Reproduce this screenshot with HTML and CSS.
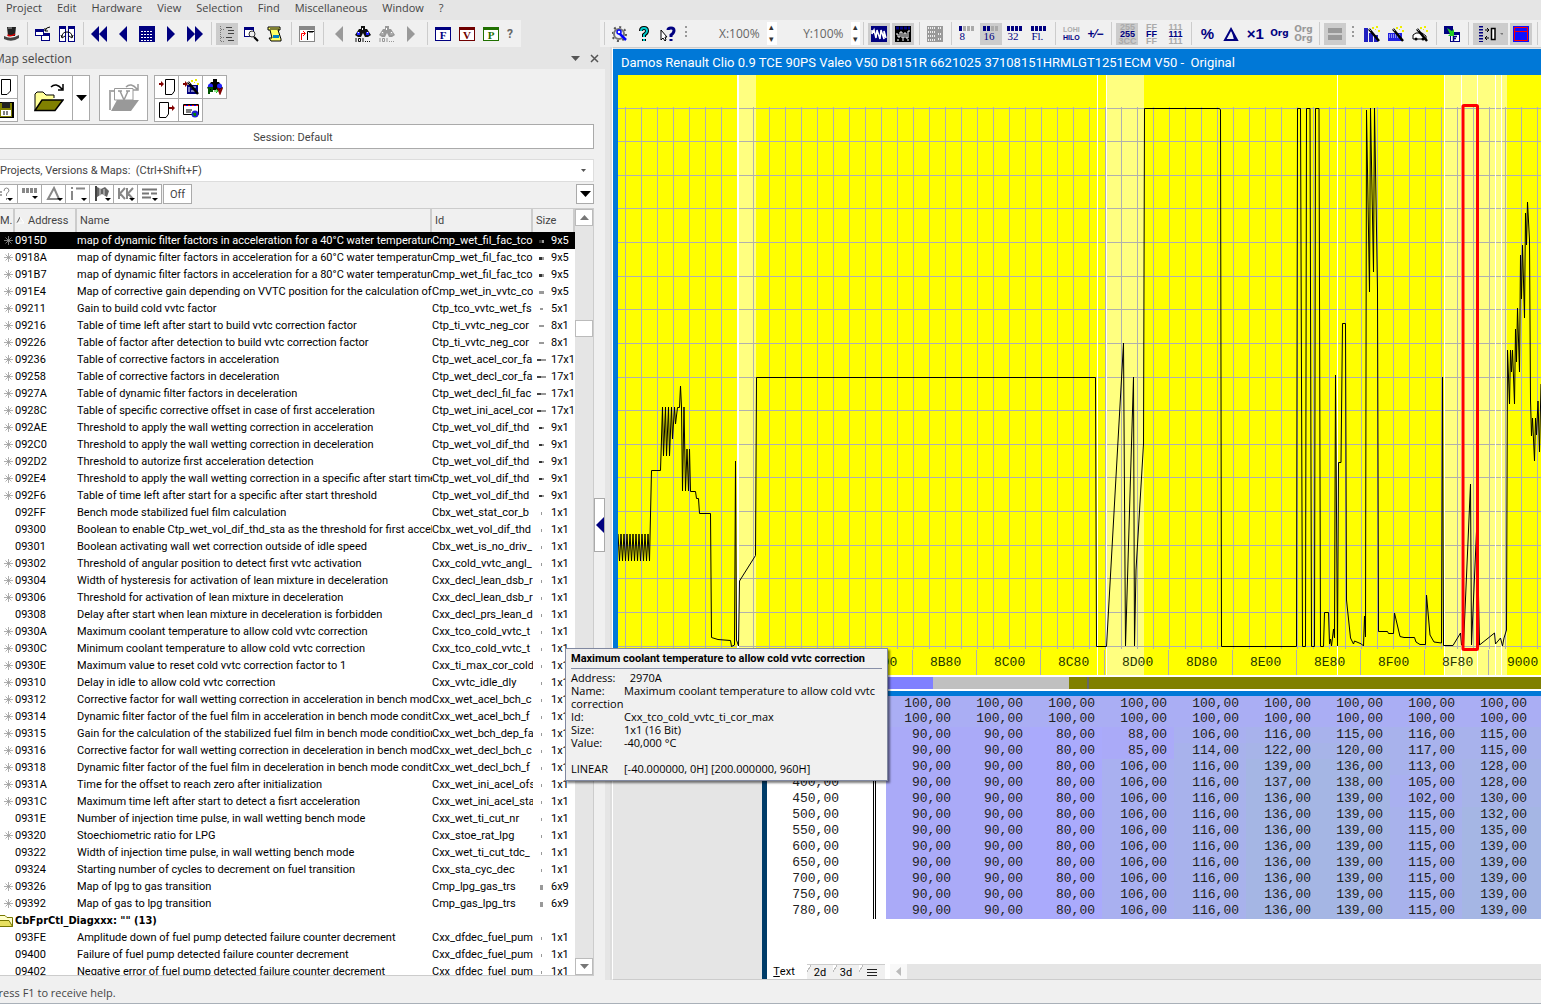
FILE: index.html
```html
<!DOCTYPE html>
<html lang="en">

<head>
    <meta charset="utf-8">
    <title>Damos Renault Clio 0.9 TCE 90PS</title>
    <link rel="stylesheet" href="styles.css">
</head>

<body>
    <!-- Shared icon shapes -->
    <svg class="defs" aria-hidden="true">
        <symbol id="star" viewBox="0 0 9 9"><path d="M4.500 0V9M0 4.500H9M1.500 1.500L7.500 7.500M7.500 1.500L1.500 7.500" stroke="#999" stroke-width=".8"/></symbol>
        <symbol id="prev" viewBox="0 0 16 16"><path d="M12 0V16L4 8z" fill="currentColor"/></symbol>
        <symbol id="next" viewBox="0 0 16 16"><path d="M4 0V16L12 8z" fill="currentColor"/></symbol>
        <symbol id="win" viewBox="0 0 16 16"><path d="M0 1H16V15H0z" fill="currentColor"/><path d="M1 4H15V14H1z" fill="#fff"/></symbol>
        <symbol id="bino" viewBox="0 0 16 16"><path d="M6 0H10V3H12L16 9L13 11H10L8 7L6 11H3L0 9L4 3H6z" fill="currentColor"/><path d="M2 6H5V9H2zM11 6H14V9H11z" fill="var(--lens)"/><path d="M3 6h1v1H3zM12 6h1v1h-1zM7 2h1v2H7z" fill="#fff"/><path d="M1 12v4M3.500 12.500h2v3h-2zM8 12v4M10 15.500h1M12 15.500h1M14 15.500h1" stroke="currentColor" fill="none"/></symbol>
        <symbol id="wand" viewBox="0 0 16 16"><path d="M5 3L15 15" stroke="#000" stroke-width="2.500"/><path d="M8 1h2v2H8zM12 0h2v2h-2zM14 4h2v2h-2zM11 3h1v1h-1z" fill="#ee0"/><path d="M5 3l2 2" stroke="#999"/></symbol>
        <symbol id="arrow" viewBox="0 0 16 16"><path d="M0 6H3V4L6 7L3 10V8H0z" fill="#800000"/></symbol>
    </svg>

    <nav class="menubar">
        <button>Project</button>
        <button>Edit</button>
        <button>Hardware</button>
        <button>View</button>
        <button>Selection</button>
        <button>Find</button>
        <button>Miscellaneous</button>
        <button>Window</button>
        <button>?</button>
    </nav>

    <div class="toolbars">
        <div class="toolbar toolbar-left">
            <button class="tool" aria-label="Assistant"><svg viewBox="0 0 16 16"><path d="M4 1H13L12 10H5z" fill="#222"/><path d="M1 10Q8 14 16 9V12Q9 17 1 13z" fill="#444"/><path d="M4.500 9Q8 11 12 8" stroke="#e00000" stroke-width="1.500" fill="none"/><path d="M5 2H9" stroke="#aaa"/></svg></button>
            <span class="sep"></span>
            <button class="tool" aria-label="Cascade"><svg viewBox="0 0 16 16"><path d="M0 3H9V10H0zM6 7H15V15H6z" fill="#000080"/><path d="M1 6H8V9H1zM7 10H14V14H7z" fill="#fff"/><path d="M10 5Q11 1 15 1M10 2V5H13" stroke="#000" fill="none"/></svg></button>
            <button class="tool" aria-label="Tile"><svg viewBox="0 0 16 16"><path d="M0 0H7V16H0zM9 0H16V16H9z" fill="#000080"/><path d="M1 3H6V15H1zM10 3H15V15H10z" fill="#fff"/><path d="M3 11Q3 6 8 6T13 11M2 9L3 12L6 10M14 9L13 12L10 10" stroke="#000" fill="none"/></svg></button>
            <span class="sep"></span>
            <button class="tool" aria-label="First"><svg viewBox="0 0 16 16"><path d="M8 0V16L0 8zM16 0V16L8 8z" fill="#000080"/></svg></button>
            <button class="tool navy" aria-label="Previous"><svg><use href="#prev"/></svg></button>
            <button class="tool" aria-label="Hexdump"><svg viewBox="0 0 16 16"><path d="M0 0H16V16H0z" fill="#000080"/><path d="M2 5.500H14M2 8.500H14M2 11.500H14M2 14.500H14" stroke="#fff" stroke-dasharray="2 1"/></svg></button>
            <button class="tool navy" aria-label="Next"><svg><use href="#next"/></svg></button>
            <button class="tool" aria-label="Last"><svg viewBox="0 0 16 16"><path d="M0 0V16L8 8zM8 0V16L16 8z" fill="#000080"/></svg></button>
            <span class="sep"></span>
            <button class="tool on" aria-label="Tree"><svg viewBox="0 0 16 16"><path d="M1.500 0V15M2 3.500H5M2 11.500H5M2 15.500H5" stroke="#777" stroke-dasharray="1 1"/><path d="M7 1.500H13M9 4.500H15M9 7.500H15M7 11.500H13M9 14.500H15" stroke="#444"/></svg></button>
            <button class="tool" aria-label="Preview"><svg viewBox="0 0 16 16"><path d="M1 1H11V11H1z" fill="#000080"/><path d="M2 4H10V10H2z" fill="#fff"/><circle cx="9" cy="8" r="3" fill="#eee" stroke="#333"/><path d="M11 11L15 15" stroke="#000" stroke-width="2"/></svg></button>
            <button class="tool" aria-label="Script"><svg viewBox="0 0 16 16"><path d="M1 1H13V4H11L14 13V15H4L2 12H5L3 4H1z" fill="#ff6" stroke="#000"/><path d="M6 9H12V12H6z" fill="#0080c0"/><path d="M3 3H12" stroke="#000"/></svg></button>
            <span class="sep"></span>
            <button class="tool" aria-label="Axis"><svg viewBox="0 0 16 16"><path d="M0 0H16V16H0z" fill="#888"/><path d="M1 4H15V15H1z" fill="#fff"/><path d="M2.500 14V7.500H6M4 5L6.500 7.500L4 10" stroke="red" fill="none"/><path d="M8.500 14V5.500H15M11 5v2M13 5v2" stroke="#000" fill="none"/></svg></button>
            <span class="sep"></span>
            <button class="tool gray" aria-label="Find previous"><svg><use href="#prev"/></svg></button>
            <button class="tool find" aria-label="Find"><svg><use href="#bino"/></svg></button>
            <button class="tool gray" aria-label="Find again"><svg><use href="#bino"/></svg></button>
            <button class="tool gray" aria-label="Find next"><svg><use href="#next"/></svg></button>
            <span class="sep"></span>
            <button class="tool letter navy"><svg><use href="#win"/></svg><b>F</b></button>
            <button class="tool letter maroon"><svg><use href="#win"/></svg><b>V</b></button>
            <button class="tool letter green"><svg><use href="#win"/></svg><b>P</b></button>
            <button class="help">?</button>
        </div>

        <div class="toolbar toolbar-right">
            <span class="sep"></span>
            <button class="tool" aria-label="Options"><svg viewBox="0 0 16 16"><circle cx="7" cy="8" r="5" fill="none" stroke="#777" stroke-width="2"/><circle cx="7" cy="8" r="7" fill="none" stroke="#555" stroke-width="2" stroke-dasharray="2 3.500"/><path d="M7 7L14 14" stroke="#00f" stroke-width="2.500"/><circle cx="7" cy="6" r="2" fill="#fff" stroke="#00f" stroke-width="1.500"/></svg></button>
            <button class="tool" aria-label="Help"><svg viewBox="0 0 16 16"><path d="M5 5Q5 2 8 2T11 5Q11 7 8 9V11M8 13V15" fill="none" stroke="#000" stroke-width="4"/><path d="M5 5Q5 2 8 2T11 5Q11 7 8 9V11M8 13V15" fill="none" stroke="#0cc" stroke-width="2"/></svg></button>
            <button class="tool" aria-label="Context help"><svg viewBox="0 0 16 16"><path d="M1 4V14L3 12L5 15L6 14L5 11H7z" fill="#fff" stroke="#000"/><path d="M8 4Q8 2 11 2T14 4.500Q14 7 11 9V11M11 13V15" fill="none" stroke="#000080" stroke-width="3"/></svg></button>
            <span class="grip"></span>
            <label class="zoom"><input type="text" value="X:100%" aria-label="X zoom"></label>
            <span class="spin"><button aria-label="More X">▴</button><button aria-label="Less X">▾</button></span>
            <label class="zoom"><input type="text" value="Y:100%" aria-label="Y zoom"></label>
            <span class="spin"><button aria-label="More Y">▴</button><button aria-label="Less Y">▾</button></span>
            <span class="sep"></span>
            <button class="tool on" aria-label="2d"><svg viewBox="0 0 16 16"><path d="M0 0H16V16H0z" fill="#000080"/><path d="M1 4V8L3 4L5 12L6 4L9 13L10 4L13 13V5L15 12" fill="none" stroke="#fff" stroke-width="1.500"/></svg></button>
            <button class="tool on" aria-label="2d bits"><svg viewBox="0 0 16 16"><path d="M0 0H16V16H0z" fill="#000"/><path d="M1 2H15" stroke="#000080" stroke-width="3" stroke-dasharray="3 1"/><path d="M1 8H3V11H5V6H7V12H9V7H11V12H13V5H15M2 14H4M7 14H9M12 14H14" fill="none" stroke="#fff"/></svg></button>
            <span class="sep"></span>
            <button class="tool" aria-label="Columns"><svg viewBox="0 0 16 16"><path d="M0 0H16V16H0z" fill="#999"/><path d="M1 2H8M1 6H8M1 10H8M1 14H8M11 2H15M11 8H15M11 13H15" stroke="#eee" stroke-width="2" stroke-dasharray="1 1"/></svg></button>
            <span class="sep"></span>
            <button class="tool bits"><svg viewBox="0 0 16 5"><path d="M0 0h3v5H0z" fill="#000080"/><path d="M4 0h3v5H4zM8 0h3v5H8zM12 0h3v5h-3z" fill="#aaa"/></svg>8</button>
            <button class="tool bits on"><svg viewBox="0 0 16 5"><path d="M0 0h3v5H0zM4 0h3v5H4z" fill="#000080"/><path d="M8 0h3v5H8zM12 0h3v5h-3z" fill="#aaa"/></svg>16</button>
            <button class="tool bits"><svg viewBox="0 0 16 5"><path d="M0 0h3v5H0zM4 0h3v5H4zM8 0h3v5H8zM12 0h3v5h-3z" fill="#000080"/></svg>32</button>
            <button class="tool bits"><svg viewBox="0 0 16 5"><path d="M0 0h3v5H0zM4 0h3v5H4zM8 0h3v5H8zM12 0h3v5h-3z" fill="#000080"/></svg>Fl.</button>
            <span class="sep"></span>
            <button class="tool tiny"><i>LOHI</i>HILO</button>
            <button class="tool sign">+⁄−</button>
            <span class="sep"></span>
            <button class="tool stack on"><i>255</i><b>255</b><i>3CC</i></button>
            <button class="tool stack"><i>FF</i><b>FF</b><i>FF</i></button>
            <button class="tool stack"><i>111</i><b>111</b><i>111</i></button>
            <span class="sep"></span>
            <button class="tool big">%</button>
            <button class="tool" aria-label="Difference"><svg viewBox="0 0 16 16"><path d="M8 3L14 14H2z" fill="none" stroke="#000080" stroke-width="2"/><path d="M8 2L14 14H11z" fill="#000080"/></svg></button>
            <button class="tool big">×1</button>
            <button class="tool org">Org</button>
            <button class="tool org off">Org<br>Org</button>
            <span class="sep"></span>
            <button class="tool on" aria-label="Lines"><svg viewBox="0 0 16 16"><path d="M1 2H15V7H1zM1 9H15V14H1z" fill="#999"/></svg></button>
            <span class="grip"></span>
            <button class="tool" aria-label="Bar wizard"><svg viewBox="0 0 16 16"><path d="M0 2H4V16H0zM5 7H9V16H5zM10 9H14V16H10z" fill="#2020c0"/><use href="#wand"/></svg></button>
            <button class="tool" aria-label="Map wizard"><svg viewBox="0 0 16 16"><path d="M0 7H14V15H0z" fill="#2020e0"/><path d="M1 9H13M1 11H13" stroke="#fff" stroke-dasharray="1 1"/><use href="#wand"/></svg></button>
            <button class="tool" aria-label="Car wizard"><svg viewBox="0 0 16 16"><path d="M1 9L4 7H10L14 10V13H1z" fill="#fff" stroke="#000"/><circle cx="4" cy="13" r="1.500"/><circle cx="11" cy="13" r="1.500"/><use href="#wand"/></svg></button>
            <span class="sep"></span>
            <button class="tool" aria-label="Compare"><svg viewBox="0 0 16 16"><path d="M0 0H9V8H0zM6 6H16V16H6z" fill="#000080"/><path d="M7 9H15V15H7z" fill="#fff"/><path d="M9.500 15V10.500H13M9.500 12.500H12" stroke="#000080" stroke-width="1.500" fill="none"/><path d="M3 2L8 5L10 3V10H4L6 8z" fill="#2c2"/></svg></button>
            <span class="sep"></span>
            <button class="tool wide on" aria-label="Swap columns"><svg viewBox="0 0 24 16"><path d="M2 0V16" stroke="#000080" stroke-width="4" stroke-dasharray="1.500 1.500"/><path d="M6 4H10M8 2L10 4L8 6M10 12H6M8 10L6 12L8 14" stroke="#000" fill="none"/><path d="M12.500 2.500H16V13.500H12.500z" fill="#fff" stroke="#000" stroke-width="1.500"/><path d="M21 7h4l-2 2z" fill="#777"/></svg></button>
            <button class="tool on" aria-label="Highlight"><svg viewBox="0 0 16 16"><path d="M0 0H16V16H0z" fill="#1010ff"/><path d="M1.500 1.500H14.500V14.500H1.500zM1.500 5.500H14.500" fill="none" stroke="red"/></svg></button>
            <span class="sep"></span>
        </div>
    </div>

    <div class="workspace">
        <aside class="panel">
            <header class="panel-head">
                <span>Map selection</span>
                <button aria-label="Panel menu"><svg viewBox="0 0 9 9"><path d="M0 2h9L4.500 7z" fill="#555"/></svg></button>
                <button aria-label="Close panel"><svg viewBox="0 0 9 9"><path d="M1 1l7 7M8 1L1 8" stroke="#555" stroke-width="1.500"/></svg></button>
            </header>

            <div class="panel-tools">
                <div class="pair cut">
                    <button aria-label="New"><svg viewBox="0 0 16 16"><path d="M3.500 .5H12.500V12L9 15.500H3.500z" fill="#fff" stroke="#000"/></svg></button>
                    <button aria-label="Save"><svg viewBox="0 0 16 16"><path d="M0 0H16V16H0z" fill="#000"/><path d="M2 1H14V15H2z" fill="#808000"/><path d="M4 0H12V6H4z" fill="#222"/><path d="M3 8H13V14H3z" fill="#fff"/><path d="M5 10h6M5 12h5" stroke="#000" stroke-dasharray="2 1"/></svg></button>
                </div>
                <button class="open" aria-label="Open"><svg viewBox="0 0 30 30"><path d="M1 27V11L3 9H9L12 12H20V15" fill="#ff9" stroke="#000"/><path d="M1 27.500L8 17H29L21 27.500z" fill="#808000" stroke="#000" stroke-width="1.500"/><path d="M17 4Q22-1 28 6M24 7H29V1" fill="none" stroke="#000" stroke-width="1.500"/></svg></button>
                <button class="drop" aria-label="Recent"><svg viewBox="0 0 11 6"><path d="M0 0H11L5.500 6z"/></svg></button>
                <button class="open version" aria-label="Open version"><svg viewBox="0 0 30 30"><path d="M1 27V8H5M20 11V15" fill="none" stroke="#aaa" stroke-width="2"/><path d="M5.500 5.500H24V17H5.500z" fill="#fff" stroke="#999"/><path d="M11 8L15 17L19 8M9 8h4M17 8h4" fill="none" stroke="#999" stroke-width="1.500"/><path d="M2 28L8 17H30L22 28z" fill="#999"/><path d="M17 4Q22-1 28 6M24 7H29V1" fill="none" stroke="#999" stroke-width="1.500"/></svg></button>
                <div class="pair">
                    <button aria-label="Import"><svg viewBox="0 0 16 16"><use href="#arrow" x="-1" y="-2"/><path d="M6.500 .5H15.500V12L13 15.500H6.500z" fill="#fff" stroke="#000"/></svg></button>
                    <button aria-label="Export"><svg viewBox="0 0 16 16"><path d="M.5 .5H9.500V12L7 15.500H.5z" fill="#fff" stroke="#000"/><use href="#arrow" x="10" y="-1"/></svg></button>
                </div>
                <div class="pair">
                    <button aria-label="Import wizard"><svg viewBox="0 0 16 16"><path d="M4 6H15V15H4z" fill="#000080"/><path d="M6 8v5M8 8h5M8 12h5" stroke="#fff"/><use href="#arrow" x="-1" y="-2"/><use href="#wand"/></svg></button>
                    <button aria-label="Mail"><svg viewBox="0 0 16 16"><path d="M.5 2.500H15.500V12.500H.5z" fill="#fff" stroke="#000"/><path d="M1 3.500H15" stroke="red" stroke-dasharray="2 2"/><path d="M3 3.500H15" stroke="#00f" stroke-dasharray="2 2"/><path d="M3 8h6M3 10h5" stroke="#000"/><circle cx="12" cy="12" r="3.500" fill="#22c"/><path d="M10 11h3v3h-2z" fill="#080"/></svg></button>
                </div>
                <div class="pair">
                    <button aria-label="Find project"><svg viewBox="0 0 16 16"><path d="M6 0H10V3H12L16 9L13 11H3L0 9L4 3H6z"/><circle cx="3.500" cy="7" r="2.500" fill="#22f"/><circle cx="12.500" cy="7" r="2.500" fill="#22f"/><path d="M2 15V9H5V12H2" stroke="#050" stroke-width="2" fill="none"/><path d="M7 12H11M9 10L11 12L9 14" stroke="#2c2" fill="none"/><path d="M11 9L13 14L15 9" stroke="#800000" stroke-width="2" fill="none"/></svg></button>
                </div>
            </div>

            <button class="session">Session: Default</button>

            <div class="search">
                <input type="text" placeholder="Projects, Versions &amp; Maps:&nbsp; (Ctrl+Shift+F)" aria-label="Projects, Versions and Maps">
                <button aria-label="History"><svg viewBox="0 0 5 3"><path d="M0 0H5L2.500 3z" fill="#555"/></svg></button>
            </div>

            <div class="filters">
                <button aria-label="Value filter"><svg viewBox="0 0 18 16"><path d="M0 6h5M0 9h5" stroke="#888" stroke-width="1.500"/><path d="M7 5Q7 2 9.500 2T12 5L9.500 8V10M9.500 12v2" stroke="#888" fill="none"/><path d="M10 12h6l-3 3z"/></svg></button>
                <button aria-label="Type filter"><svg viewBox="0 0 18 16"><path d="M1 2h3v5H1zM5 2h3v5H5zM9 2h3v5H9zM13 2h3v5h-3z" fill="#888"/><path d="M11 10h6l-3 3z"/></svg></button>
                <button aria-label="Difference filter"><svg viewBox="0 0 18 16"><path d="M9 2L14 13H3z" stroke="#888" stroke-width="2" fill="none"/><path d="M12 12h6l-3 3z"/></svg></button>
                <button aria-label="Info filter"><svg viewBox="0 0 18 16"><path d="M3 1v2M3 5v9M7 2.500H16" stroke="#888" stroke-width="2"/><path d="M12 12h6l-3 3z"/></svg></button>
                <button aria-label="Flag filter"><svg viewBox="0 0 18 16"><path d="M3 0V15" stroke="#444" stroke-width="2"/><path d="M4 1L8 3L12 1L16 5L14 11L9 8L4 11z" fill="#666"/><path d="M7 2v8M11 3v6" stroke="#ddd"/><path d="M12 12h6l-3 3z"/></svg></button>
                <button aria-label="Key filter"><svg viewBox="0 0 18 16"><path d="M2 2v11M8 2L3 7.500L8 13M10 2v11M16 2L11 7.500L16 13" stroke="#888" stroke-width="2" fill="none"/><path d="M12 12h6l-3 3z"/></svg></button>
                <button aria-label="List filter"><svg viewBox="0 0 18 16"><path d="M1 3.500H16M1 7.500H8M10 7.500H16M1 11.500H10" stroke="#777" stroke-width="2"/><path d="M11 12h6l-3 3z"/></svg></button>
                <button class="off">Off</button>
                <button class="more" aria-label="More filters"><svg viewBox="0 0 11 6"><path d="M0 0H11L5.500 6z"/></svg></button>
            </div>

            <div class="list">
                <table class="maps">
                    <colgroup><col class="col-mark"><col class="col-address"><col><col class="col-id"><col class="col-shape"><col class="col-size"></colgroup>
                    <thead>
                        <tr><th>M.</th><th><svg class="sort" viewBox="0 0 8 7"><path d="M1 6L4 0" stroke="#555"/><path d="M4 0L8 6H1" stroke="#fff" fill="none"/></svg>Address</th><th>Name</th><th>Id</th><th colspan="2">Size</th></tr>
                    </thead>
                    <tbody>
                        <tr class="selected"><td><svg><use href="#star"/></svg></td><td>0915D</td><td>map of dynamic filter factors in acceleration for a 40°C water temperature</td><td>Cmp_wet_fil_fac_tco</td><td><i class="s9 dark"></i></td><td>9x5</td></tr>
                        <tr><td><svg><use href="#star"/></svg></td><td>0918A</td><td>map of dynamic filter factors in acceleration for a 60°C water temperature</td><td>Cmp_wet_fil_fac_tco</td><td><i class="s9 dark"></i></td><td>9x5</td></tr>
                        <tr><td><svg><use href="#star"/></svg></td><td>091B7</td><td>map of dynamic filter factors in acceleration for a 80°C water temperature</td><td>Cmp_wet_fil_fac_tco</td><td><i class="s9 dark"></i></td><td>9x5</td></tr>
                        <tr><td><svg><use href="#star"/></svg></td><td>091E4</td><td>Map of corrective gain depending on VVTC position for the calculation of the</td><td>Cmp_wet_in_vvtc_co</td><td><i class="s9"></i></td><td>9x5</td></tr>
                        <tr><td><svg><use href="#star"/></svg></td><td>09211</td><td>Gain to build cold vvtc factor</td><td>Ctp_tco_vvtc_wet_fs</td><td><i class="s5"></i></td><td>5x1</td></tr>
                        <tr><td><svg><use href="#star"/></svg></td><td>09216</td><td>Table of time left after start to build vvtc correction factor</td><td>Ctp_ti_vvtc_neg_cor</td><td><i class="s8"></i></td><td>8x1</td></tr>
                        <tr><td><svg><use href="#star"/></svg></td><td>09226</td><td>Table of factor after detection to build vvtc correction factor</td><td>Ctp_ti_vvtc_neg_cor</td><td><i class="s8"></i></td><td>8x1</td></tr>
                        <tr><td><svg><use href="#star"/></svg></td><td>09236</td><td>Table of corrective factors in acceleration</td><td>Ctp_wet_acel_cor_fa</td><td><i class="s17"></i></td><td>17x1</td></tr>
                        <tr><td><svg><use href="#star"/></svg></td><td>09258</td><td>Table of corrective factors in deceleration</td><td>Ctp_wet_decl_cor_fa</td><td><i class="s17"></i></td><td>17x1</td></tr>
                        <tr><td><svg><use href="#star"/></svg></td><td>0927A</td><td>Table of dynamic filter factors in deceleration</td><td>Ctp_wet_decl_fil_fac</td><td><i class="s17"></i></td><td>17x1</td></tr>
                        <tr><td><svg><use href="#star"/></svg></td><td>0928C</td><td>Table of specific corrective offset in case of first acceleration</td><td>Ctp_wet_ini_acel_cor</td><td><i class="s17"></i></td><td>17x1</td></tr>
                        <tr><td><svg><use href="#star"/></svg></td><td>092AE</td><td>Threshold to apply the wall wetting correction in acceleration</td><td>Ctp_wet_vol_dif_thd</td><td><i class="s8 dark"></i></td><td>9x1</td></tr>
                        <tr><td><svg><use href="#star"/></svg></td><td>092C0</td><td>Threshold to apply the wall wetting correction in deceleration</td><td>Ctp_wet_vol_dif_thd</td><td><i class="s8 dark"></i></td><td>9x1</td></tr>
                        <tr><td><svg><use href="#star"/></svg></td><td>092D2</td><td>Threshold to autorize first acceleration detection</td><td>Ctp_wet_vol_dif_thd</td><td><i class="s8 dark"></i></td><td>9x1</td></tr>
                        <tr><td><svg><use href="#star"/></svg></td><td>092E4</td><td>Threshold to apply the wall wetting correction in a specific after start time</td><td>Ctp_wet_vol_dif_thd</td><td><i class="s8 dark"></i></td><td>9x1</td></tr>
                        <tr><td><svg><use href="#star"/></svg></td><td>092F6</td><td>Table of time left after start for a specific after start threshold</td><td>Ctp_wet_vol_dif_thd</td><td><i class="s8 dark"></i></td><td>9x1</td></tr>
                        <tr><td></td><td>092FF</td><td>Bench mode stabilized fuel film calculation</td><td>Cbx_wet_stat_cor_b</td><td><i></i></td><td>1x1</td></tr>
                        <tr><td></td><td>09300</td><td>Boolean to enable Ctp_wet_vol_dif_thd_sta as the threshold for first acceleration</td><td>Cbx_wet_vol_dif_thd</td><td><i></i></td><td>1x1</td></tr>
                        <tr><td></td><td>09301</td><td>Boolean activating wall wet correction outside of idle speed</td><td>Cbx_wet_is_no_driv_</td><td><i></i></td><td>1x1</td></tr>
                        <tr><td><svg><use href="#star"/></svg></td><td>09302</td><td>Threshold of angular position to detect first vvtc activation</td><td>Cxx_cold_vvtc_angl_</td><td><i></i></td><td>1x1</td></tr>
                        <tr><td><svg><use href="#star"/></svg></td><td>09304</td><td>Width of hysteresis for activation of lean mixture in deceleration</td><td>Cxx_decl_lean_dsb_r</td><td><i></i></td><td>1x1</td></tr>
                        <tr><td><svg><use href="#star"/></svg></td><td>09306</td><td>Threshold for activation of lean mixture in deceleration</td><td>Cxx_decl_lean_dsb_r</td><td><i></i></td><td>1x1</td></tr>
                        <tr><td></td><td>09308</td><td>Delay after start when lean mixture in deceleration is forbidden</td><td>Cxx_decl_prs_lean_d</td><td><i></i></td><td>1x1</td></tr>
                        <tr><td><svg><use href="#star"/></svg></td><td>0930A</td><td>Maximum coolant temperature to allow cold vvtc correction</td><td>Cxx_tco_cold_vvtc_t</td><td><i></i></td><td>1x1</td></tr>
                        <tr><td><svg><use href="#star"/></svg></td><td>0930C</td><td>Minimum coolant temperature to allow cold vvtc correction</td><td>Cxx_tco_cold_vvtc_t</td><td><i></i></td><td>1x1</td></tr>
                        <tr><td><svg><use href="#star"/></svg></td><td>0930E</td><td>Maximum value to reset cold vvtc correction factor to 1</td><td>Cxx_ti_max_cor_cold</td><td><i></i></td><td>1x1</td></tr>
                        <tr><td><svg><use href="#star"/></svg></td><td>09310</td><td>Delay in idle to allow cold vvtc correction</td><td>Cxx_vvtc_idle_dly</td><td><i></i></td><td>1x1</td></tr>
                        <tr><td><svg><use href="#star"/></svg></td><td>09312</td><td>Corrective factor for wall wetting correction in acceleration in bench mode</td><td>Cxx_wet_acel_bch_c</td><td><i></i></td><td>1x1</td></tr>
                        <tr><td><svg><use href="#star"/></svg></td><td>09314</td><td>Dynamic filter factor of the fuel film in acceleration in bench mode conditions</td><td>Cxx_wet_acel_bch_f</td><td><i></i></td><td>1x1</td></tr>
                        <tr><td><svg><use href="#star"/></svg></td><td>09315</td><td>Gain for the calculation of the stabilized fuel film in bench mode conditions</td><td>Cxx_wet_bch_dep_fa</td><td><i></i></td><td>1x1</td></tr>
                        <tr><td><svg><use href="#star"/></svg></td><td>09316</td><td>Corrective factor for wall wetting correction in deceleration in bench mode</td><td>Cxx_wet_decl_bch_c</td><td><i></i></td><td>1x1</td></tr>
                        <tr><td><svg><use href="#star"/></svg></td><td>09318</td><td>Dynamic filter factor of the fuel film in deceleration in bench mode conditions</td><td>Cxx_wet_decl_bch_f</td><td><i></i></td><td>1x1</td></tr>
                        <tr><td><svg><use href="#star"/></svg></td><td>0931A</td><td>Time for the offset to reach zero after initialization</td><td>Cxx_wet_ini_acel_ofs</td><td><i></i></td><td>1x1</td></tr>
                        <tr><td><svg><use href="#star"/></svg></td><td>0931C</td><td>Maximum time left after start to detect a fisrt acceleration</td><td>Cxx_wet_ini_acel_sta</td><td><i></i></td><td>1x1</td></tr>
                        <tr><td></td><td>0931E</td><td>Number of injection time pulse, in wall wetting bench mode</td><td>Cxx_wet_ti_cut_nr</td><td><i></i></td><td>1x1</td></tr>
                        <tr><td><svg><use href="#star"/></svg></td><td>09320</td><td>Stoechiometric ratio for LPG</td><td>Cxx_stoe_rat_lpg</td><td><i></i></td><td>1x1</td></tr>
                        <tr><td></td><td>09322</td><td>Width of injection time pulse, in wall wetting bench mode</td><td>Cxx_wet_ti_cut_tdc_</td><td><i></i></td><td>1x1</td></tr>
                        <tr><td></td><td>09324</td><td>Starting number of cycles to decrement on fuel transition</td><td>Cxx_sta_cyc_dec</td><td><i></i></td><td>1x1</td></tr>
                        <tr><td><svg><use href="#star"/></svg></td><td>09326</td><td>Map of lpg to gas transition</td><td>Cmp_lpg_gas_trs</td><td><i class="s6"></i></td><td>6x9</td></tr>
                        <tr><td><svg><use href="#star"/></svg></td><td>09392</td><td>Map of gas to lpg transition</td><td>Cmp_gas_lpg_trs</td><td><i class="s6"></i></td><td>6x9</td></tr>
                        <tr class="group"><td><svg viewBox="0 0 13 12"><path d="M-3 11.500V2L0 .5H5L7 2.500H12.500V11.500z" fill="#ffc" stroke="#777700"/><path d="M-3 11.500L0 5.500H9L12.500 11.500z" fill="#e8e060" stroke="#777700"/></svg></td><td colspan="5">CbFprCtl_Diagxxx: "" (13)</td></tr>
                        <tr><td></td><td>093FE</td><td>Amplitude down of fuel pump detected failure counter decrement</td><td>Cxx_dfdec_fuel_pum</td><td><i></i></td><td>1x1</td></tr>
                        <tr><td></td><td>09400</td><td>Failure of fuel pump detected failure counter decrement</td><td>Cxx_dfdec_fuel_pum</td><td><i></i></td><td>1x1</td></tr>
                        <tr><td></td><td>09402</td><td>Negative error of fuel pump detected failure counter decrement</td><td>Cxx_dfdec_fuel_pum</td><td><i></i></td><td>1x1</td></tr>
                    </tbody>
                </table>
                <div class="scroll">
                    <button aria-label="Scroll up"><svg viewBox="0 0 9 5"><path d="M0 5H9L4.500 0z" fill="#777"/></svg></button>
                    <span class="thumb"></span>
                    <button aria-label="Scroll down"><svg viewBox="0 0 9 5"><path d="M0 0H9L4.500 5z" fill="#777"/></svg></button>
                </div>
            </div>
        </aside>

        <div class="gutter"><button aria-label="Collapse panel"><svg viewBox="0 0 8 16"><path d="M8 0V16L0 8z" fill="#000080"/></svg></button></div>
        <div class="splitter"></div>

        <main class="docs">
            <section class="graph">
                <h1>Damos Renault Clio 0.9 TCE 90PS Valeo V50 D8151R 6621025 37108151HRMLGT1251ECM V50 -&nbsp; Original</h1>
                <svg class="plot" viewBox="618 75 923 600" preserveAspectRatio="xMinYMin slice">
                    <defs>
                        <pattern id="cols" x="625" y="0" width="16" height="700" patternUnits="userSpaceOnUse"><rect width="1" height="700" fill="#b0b0b0"/></pattern>
                        <pattern id="ticks" x="656" y="0" width="64" height="700" patternUnits="userSpaceOnUse"><rect width="1" height="700" fill="#b0b0b0"/></pattern>
                    </defs>
                    <path d="M739 75H756V675H739zM1107 75H1144V675H1107zM1445 75H1507V675H1445z" fill="#ffff80"/>
                    <rect x="618" y="107" width="923" height="542" fill="url(#cols)"/>
                    <rect x="618" y="650" width="923" height="25" fill="url(#ticks)"/>
                    <path d="M618 108.500H1541M618 141.500H1541M618 175.500H1541M618 208.500H1541M618 242.500H1541M618 276.500H1541M618 309.500H1541M618 343.500H1541M618 377.500H1541M618 410.500H1541M618 444.500H1541M618 477.500H1541M618 511.500H1541M618 545.500H1541M618 578.500H1541M618 612.500H1541M618 646.500H1541" stroke="#b0b0b0"/>
                    <path d="M737 75h2V675h-2zM1106 75h1V675h-1zM1097 75h1V675h-1zM1337 75h1V675h-1zM1444 75h1V675h-1zM1461 75h1V675h-1zM1477 75h1V675h-1zM1495 75h1V675h-1zM1501 75h1V675h-1z" fill="#fff"/>
                    <!-- Value curve -->
                    <path class="curve" d="M618 534l1.500 27l1.500-27l1.500 27l1.500-27l1.500 27l1.500-27l1.500 27l1.500-27l1.500 27l1.500-27l1.500 27l1.500-27l1.500 27l1.500-27l1.500 27l1.500-27l1.500 27l1.500-27l1.500 27l1.500-27l1.500 27L651.500 470.500H660.500L662.500 407L663.500 456L665.500 407L666.500 456L668.500 407L669.500 456L671.500 407L672.500 439L674.500 407L675.500 424L677.500 407.500H679.500L680.500 386L681.500 407L682.500 491L684 407L685.500 491L687 449L688.500 491L689.500 449L690.500 491.500H695.500L696.500 498.500H698.500L699.500 513.500H710.500L711.500 637.500L718 639.500L730.500 640.500L731.500 646.500L734.500 645L735.500 461L736.500 640L738.500 646L739.500 581L755.500 555.500L756.500 377.500H1095.500L1096.500 646.500H1106.500L1123.500 343L1125.500 646L1133.500 377L1134.500 646L1136 570L1143.500 444L1144.500 108.500H1219.500L1220.500 110L1221.500 646.500H1296.500L1297.500 108.500H1300.500L1302.500 646.500H1305.500L1306.500 108.500H1310L1311.500 646.500H1314.500L1315.500 108.500H1319L1320.500 646.500H1323.500L1324.500 612.500H1328.500L1329.500 644L1330.500 639L1331.500 646L1333.500 629L1334.500 638L1335.500 375L1337.500 646L1338.500 462.500H1341L1342.500 323.500H1345.500L1346.500 600L1350.500 638L1353.500 644L1354.500 641L1361.500 644L1363.500 646L1364.500 616L1365.500 637L1366.500 110L1369.500 292L1370.500 108L1373.500 272L1374.500 108L1377.500 290L1378.500 631.500H1387.500L1388.500 633.500H1393.500L1394.500 613L1400 636.500L1404 637.500H1414.500L1416 642L1420 644.500H1425.500L1426.500 595L1430 635L1434 642L1441.500 643L1442.500 377L1443.500 645.500H1453L1460.500 633L1461.500 645H1463.500L1470.500 484L1471.500 645L1477 520L1479.500 645L1494.500 633L1495.500 644L1500.500 638L1502.500 646L1504 638L1506.500 630L1507.500 350L1509.500 404L1510.500 350L1511.500 372L1512.500 350L1514.500 404L1515.500 329L1516.500 362L1517.500 308L1519.500 372L1520.500 255L1521.500 299L1522.500 245L1524.500 318L1525.500 213L1526.500 245L1527.500 202L1529.500 240L1530.500 400L1531.500 436L1532.500 418L1534.500 461L1535.500 418L1536.500 435L1538 401L1539.500 452L1541 384"/>
                    <g class="ticks">
                        <text x="866" y="666">8B00</text>
                        <text x="930" y="666">8B80</text>
                        <text x="994" y="666">8C00</text>
                        <text x="1058" y="666">8C80</text>
                        <text x="1122" y="666">8D00</text>
                        <text x="1186" y="666">8D80</text>
                        <text x="1250" y="666">8E00</text>
                        <text x="1314" y="666">8E80</text>
                        <text x="1378" y="666">8F00</text>
                        <text x="1442" y="666">8F80</text>
                        <text x="1507" y="666">9000</text>
                    </g>
                    <rect x="1463" y="105.500" width="14.500" height="544" rx="1" fill="none" stroke="red" stroke-width="3"/>
                </svg>
                <div class="overview"><span class="used"></span><span class="empty"></span><span class="rest"></span></div>
            </section>

            <div class="lower">
                <div class="desktop"></div>
                <section class="text-view">
                    <table class="values">
                        <tbody>
                            <tr><th></th><td></td><td class="c">100,00</td><td class="c">100,00</td><td class="c">100,00</td><td class="c">100,00</td><td class="c">100,00</td><td class="c">100,00</td><td class="c">100,00</td><td class="c">100,00</td><td class="c">100,00</td><td class="c"></td></tr>
                            <tr><th></th><td></td><td class="c">100,00</td><td class="c">100,00</td><td class="c">100,00</td><td class="c">100,00</td><td class="c">100,00</td><td class="c">100,00</td><td class="c">100,00</td><td class="c">100,00</td><td class="c">100,00</td><td class="c"></td></tr>
                            <tr><th></th><td></td><td class="b">90,00</td><td class="b">90,00</td><td class="a">80,00</td><td class="b">88,00</td><td class="d">106,00</td><td class="e">116,00</td><td class="e">115,00</td><td class="e">116,00</td><td class="e">115,00</td><td class="e"></td></tr>
                            <tr><th></th><td></td><td class="b">90,00</td><td class="b">90,00</td><td class="a">80,00</td><td class="b">85,00</td><td class="e">114,00</td><td class="f">122,00</td><td class="f">120,00</td><td class="e">117,00</td><td class="e">115,00</td><td class="e"></td></tr>
                            <tr><th></th><td></td><td class="b">90,00</td><td class="b">90,00</td><td class="a">80,00</td><td class="d">106,00</td><td class="e">116,00</td><td class="g">139,00</td><td class="g">136,00</td><td class="e">113,00</td><td class="f">128,00</td><td class="f"></td></tr>
                            <tr><th>400,00</th><td></td><td class="b">90,00</td><td class="b">90,00</td><td class="a">80,00</td><td class="d">106,00</td><td class="e">116,00</td><td class="g">137,00</td><td class="g">138,00</td><td class="d">105,00</td><td class="f">128,00</td><td class="f"></td></tr>
                            <tr><th>450,00</th><td></td><td class="b">90,00</td><td class="b">90,00</td><td class="a">80,00</td><td class="d">106,00</td><td class="e">116,00</td><td class="g">136,00</td><td class="g">139,00</td><td class="d">102,00</td><td class="f">130,00</td><td class="f"></td></tr>
                            <tr><th>500,00</th><td></td><td class="b">90,00</td><td class="b">90,00</td><td class="a">80,00</td><td class="d">106,00</td><td class="e">116,00</td><td class="g">136,00</td><td class="g">139,00</td><td class="e">115,00</td><td class="g">132,00</td><td class="g"></td></tr>
                            <tr><th>550,00</th><td></td><td class="b">90,00</td><td class="b">90,00</td><td class="a">80,00</td><td class="d">106,00</td><td class="e">116,00</td><td class="g">136,00</td><td class="g">139,00</td><td class="e">115,00</td><td class="g">135,00</td><td class="g"></td></tr>
                            <tr><th>600,00</th><td></td><td class="b">90,00</td><td class="b">90,00</td><td class="a">80,00</td><td class="d">106,00</td><td class="e">116,00</td><td class="g">136,00</td><td class="g">139,00</td><td class="e">115,00</td><td class="g">139,00</td><td class="g"></td></tr>
                            <tr><th>650,00</th><td></td><td class="b">90,00</td><td class="b">90,00</td><td class="a">80,00</td><td class="d">106,00</td><td class="e">116,00</td><td class="g">136,00</td><td class="g">139,00</td><td class="e">115,00</td><td class="g">139,00</td><td class="g"></td></tr>
                            <tr><th>700,00</th><td></td><td class="b">90,00</td><td class="b">90,00</td><td class="a">80,00</td><td class="d">106,00</td><td class="e">116,00</td><td class="g">136,00</td><td class="g">139,00</td><td class="e">115,00</td><td class="g">139,00</td><td class="g"></td></tr>
                            <tr><th>750,00</th><td></td><td class="b">90,00</td><td class="b">90,00</td><td class="a">80,00</td><td class="d">106,00</td><td class="e">116,00</td><td class="g">136,00</td><td class="g">139,00</td><td class="e">115,00</td><td class="g">139,00</td><td class="g"></td></tr>
                            <tr><th>780,00</th><td></td><td class="b">90,00</td><td class="b">90,00</td><td class="a">80,00</td><td class="d">106,00</td><td class="e">116,00</td><td class="g">136,00</td><td class="g">139,00</td><td class="e">115,00</td><td class="g">139,00</td><td class="g"></td></tr>
                        </tbody>
                    </table>
                    <div class="tabs">
                        <button class="current"><u>T</u>ext</button>
                        <button>2d</button>
                        <button>3d</button>
                        <button aria-label="List"><svg viewBox="0 0 10 7"><path d="M0 .5H10M0 3.500H10M0 6.500H10" stroke="#222"/></svg></button>
                        <div class="hscroll"><button aria-label="Scroll left"><svg viewBox="0 0 5 9"><path d="M5 0V9L0 4.500z" fill="#bbb"/></svg></button></div>
                    </div>
                </section>
            </div>
        </main>
    </div>

    <footer class="status"><span>Press F1 to receive help.</span></footer>

    <div class="tip" role="tooltip">
        <h2>Maximum coolant temperature to allow cold vvtc correction</h2>
        <p><span>Address:</span> &nbsp;2970A</p>
        <p><span>Name:</span>Maximum coolant temperature to allow cold vvtc correction</p>
        <p><span>Id:</span>Cxx_tco_cold_vvtc_ti_cor_max</p>
        <p><span>Size:</span>1x1 (16 Bit)</p>
        <p><span>Value:</span>-40,000 °C</p>
        <p class="formula"><span>LINEAR</span>[-40.000000, 0H] [200.000000, 960H]</p>
    </div>
</body>

</html>
```

FILE: styles.css
```css
* {
    box-sizing: border-box;
}

body {
    margin: 0;
    height: 100vh;
    display: flex;
    flex-direction: column;
    overflow: hidden;
    position: relative;
    background-color: #e5e5e5;
    font-family: Roboto, "Liberation Sans", sans-serif;
    font-size: 11px;
    color: #000;
}

button,
input {
    margin: 0;
    padding: 0;
    border: 0;
    background: none;
    font: inherit;
    color: inherit;
}

button {
    display: flex;
    align-items: center;
    justify-content: center;
}

svg {
    display: block;
    flex: none;
}

.defs {
    position: absolute;
    width: 0;
    height: 0;
}

/* Menu and toolbars */
.menubar {
    display: flex;
    gap: 15px;
    height: 20px;
    padding: 0 6px 6px;
    font-family: "Open Sans", sans-serif;
    color: #444;
}

.toolbars {
    display: flex;
    height: 27px;
}

.toolbar {
    display: flex;
    align-items: center;
    background-color: #f0f0f0;
}

.toolbar-left {
    width: 521px;
    padding-right: 4px;
    margin-right: 79px;
    overflow: hidden;
}

.toolbar-left .tool:first-child {
    margin-left: -1px;
}

.toolbar-right {
    flex: 1;
    overflow: hidden;
}

.tool {
    flex: none;
    width: 24px;
    height: 22px;
    border: 1px solid #f0f0f0;
    border-width: 0 1px;
    color: #000080;
    position: relative;
}

.tool svg {
    width: 16px;
    height: 16px;
}

.tool.on {
    background-color: #ccc;
}

.tool.wide {
    width: 37px;
}

.tool.wide svg {
    width: 24px;
}

.navy { color: #000080; }
.maroon { color: #700000; }
.green { color: #207000; }
.gray { color: #999; --lens: #aaa; }
.find { color: #111; --lens: #22f; }

.sep {
    flex: none;
    width: 8px;
    height: 23px;
    border-left: 1px solid #ccc;
    margin-left: 4px;
    margin-right: -4px;
}

.letter b {
    position: absolute;
    left: 0;
    right: 0;
    top: 5px;
    font: bold 11px/14px "Liberation Serif", serif;
}

.help {
    width: 16px;
    font-size: 12px;
    font-weight: bold;
    color: #666;
}

.grip {
    width: 3px;
    height: 11px;
    margin: 0 5px 4px;
    border-left: 2px dotted #999;
}

.zoom input {
    width: 74px;
    text-align: right;
    padding-right: 7px;
    font-family: "Open Sans", sans-serif;
    font-size: 12px;
    color: #666;
}

.spin {
    display: flex;
    flex-direction: column;
    justify-content: space-around;
    width: 17px;
    height: 23px;
    background-color: #fff;
    font-size: 9px;
    line-height: 9px;
    color: #333;
}

.spin + .sep {
    margin-left: 3px;
}

.bits {
    flex-direction: column;
    align-items: flex-start;
    padding-left: 3px;
    font: 11px/11px "Liberation Serif", serif;
}

.tool.bits svg {
    height: 5px;
}

.tiny {
    flex-direction: column;
    font: bold 7px/8px "Liberation Sans", sans-serif;
}

.tiny i {
    font-style: normal;
    color: #aaa;
}

.sign {
    font: bold 12px "Liberation Sans", sans-serif;
}

.stack {
    flex-direction: column;
    overflow: hidden;
    font: bold 9px/6px "Liberation Sans", sans-serif;
}

.stack i {
    font-style: normal;
    color: #aaa;
}

.stack b {
    line-height: 8px;
}

.big {
    font: bold 15px "Liberation Sans", sans-serif;
}

.org {
    font: bold 9px/9px "DejaVu Sans", sans-serif;
}

.org.off {
    color: #999;
}

/* Left panel */
.workspace {
    display: flex;
    flex: 1;
    min-height: 0;
}

.panel {
    display: flex;
    flex-direction: column;
    width: 594px;
    background-color: #f0f0f0;
}

.panel-head {
    display: flex;
    align-items: center;
    flex: none;
    gap: 10px;
    width: 604px;
    height: 22px;
    padding-right: 5px;
    background-color: #e5e5e5;
    font: 12px "Open Sans", sans-serif;
    color: #444;
}

.panel-head span {
    flex: 1;
    margin-left: -6px;
}

.panel-head svg {
    width: 9px;
    height: 9px;
}

.panel-tools {
    display: flex;
    height: 47px;
    margin: 6px 0 2px;
}

.panel-tools button,
.filters button {
    border: 1px solid #aaa;
    background-color: #fff;
}

.pair {
    display: flex;
    flex-direction: column;
    width: 25px;
    margin-right: -1px;
}

.pair.cut {
    margin: 0 6px 0 -7px;
}

.pair button {
    height: 24px;
}

.pair button + button {
    margin-top: -1px;
}

.pair svg {
    width: 16px;
    height: 16px;
}

.panel-tools .open {
    width: 49px;
    height: 46px;
}

.open svg {
    width: 30px;
    height: 30px;
}

.panel-tools .drop {
    width: 18px;
    height: 46px;
    margin-left: -1px;
    margin-right: 9px;
}

.drop svg,
.more svg {
    width: 11px;
    height: 6px;
}

.panel-tools .version {
    margin-right: 6px;
}

.session {
    height: 25px;
    margin-bottom: 10px;
    padding: 1px 7px 0 0;
    border: 1px solid #aaa;
    border-left: 0;
    background-color: #fff;
    color: #444;
}

.search {
    display: flex;
    height: 23px;
    margin-bottom: 2px;
    padding-right: 7px;
    border: 1px solid #ddd;
    border-left: 0;
    background-color: #fff;
}

.search input {
    flex: 1;
    color: #444;
}

.search input::placeholder {
    color: #444;
}

.search svg {
    width: 5px;
    height: 3px;
}

.filters {
    display: flex;
    height: 20px;
    margin-bottom: 4px;
    margin-left: -7px;
    color: #444;
}

.filters button {
    width: 25px;
    margin-right: -1px;
}

.filters button svg {
    width: 18px;
    height: 16px;
}

.filters .off {
    width: 29px;
    margin-left: 2px;
}

.filters .more {
    width: 18px;
    margin-left: auto;
    margin-right: 0;
}

.filters .more svg {
    width: 11px;
    height: 6px;
}

.list {
    display: flex;
    flex: 1;
    min-height: 0;
    margin-bottom: 4px;
    overflow: hidden;
    border: 1px solid #ccc;
    border-left: 0;
    background-color: #fff;
}

.maps {
    flex: 1;
    width: 574px;
    height: max-content;
    table-layout: fixed;
    border-collapse: separate;
    border-spacing: 0;
}

.col-mark { width: 15px; }
.col-address { width: 62px; }
.col-id { width: 101px; }
.col-shape { width: 18px; }
.col-size { width: 24px; }

.maps th {
    height: 23px;
    padding: 0 0 0 3px;
    border-right: 2px solid #ccc;
    background-color: #f0f0f0;
    font-weight: normal;
    text-align: left;
    color: #444;
}

.maps th:nth-child(-n+2) {
    padding: 0;
}

.sort {
    display: inline-block;
    width: 8px;
    height: 7px;
    margin: 0 4px 0 1px;
}

.maps td {
    height: 17px;
    padding: 0;
    line-height: 15px;
    white-space: nowrap;
    overflow: hidden;
}

.maps td:nth-child(1) svg {
    width: 9px;
    height: 9px;
    margin-left: 4px;
}

.maps td:nth-child(5) {
    text-align: center;
}

.maps i {
    display: inline-block;
    vertical-align: middle;
    width: 1px;
    height: 3px;
    background-color: #999;
}

.maps .s5 { width: 3px; height: 2px; }
.maps .s6 { width: 3px; height: 5px; }
.maps .s8 { width: 5px; height: 2px; }
.maps .s9 { width: 5px; height: 3px; }
.maps .s17 { width: 9px; height: 2px; border-left: 4px solid #444; }
.maps .dark { border-left: 3px solid #333; }

.maps .selected {
    background-color: #000;
    color: #fff;
}

.maps .group td {
    font: bold 11px "DejaVu Sans Condensed", "DejaVu Sans", sans-serif;
}

.maps .group td:nth-child(1) svg {
    width: 13px;
    height: 12px;
    margin-left: 0;
}

.scroll {
    display: flex;
    flex-direction: column;
    justify-content: space-between;
    width: 18px;
    background-color: #e5e5e5;
}

.scroll button {
    height: 17px;
    border: 1px solid #bbb;
    background-color: #fff;
}

.scroll svg {
    width: 9px;
    height: 5px;
}

.thumb {
    height: 17px;
    margin-top: 94px;
    margin-bottom: auto;
    border: 1px solid #bbb;
    background-color: #fff;
}

.gutter {
    display: flex;
    align-items: center;
    width: 11px;
    margin-top: 22px;
    background-color: #f0f0f0;
}

.gutter button {
    width: 11px;
    height: 54px;
    border: 1px solid #aaa;
    background-color: #fff;
}

.gutter svg {
    width: 8px;
    height: 16px;
}

.splitter {
    width: 7px;
    border-right: 2px solid #ddd;
    background-color: #e5e5e5;
}

/* Graph window */
.docs {
    display: flex;
    flex-direction: column;
    flex: 1;
    min-width: 0;
    border-top: 1px solid #ccc;
    border-left: 1px solid #fff;
    border-bottom: 1px solid #ccc;
}

.graph {
    margin-top: 1px;
    border-left: 5px solid #0078d7;
    background-color: #fff;
}

.graph h1 {
    height: 26px;
    margin: 0;
    padding-left: 3px;
    background-color: #0078d7;
    font: 13px/27px Roboto, sans-serif;
    color: #fff;
    white-space: nowrap;
}

.plot {
    width: 100%;
    height: 600px;
    background-color: #ff0;
}

.curve {
    fill: none;
    stroke: #000;
    stroke-width: 1;
}

.ticks text {
    font: 13px "Liberation Mono", monospace;
    fill: #230;
}

.overview {
    display: flex;
    height: 16px;
    padding: 2px 0;
}

.used { width: 315px; background-color: #8080ff; }
.empty { width: 136px; background-color: #c0c0c0; }
.rest { flex: 1; background: linear-gradient(90deg, transparent 18px, #666 18px 20px, transparent 20px) #808000; }

/* Text window */
.lower {
    display: flex;
    flex: 1;
    min-height: 0;
}

.desktop {
    width: 149px;
}

.text-view {
    display: flex;
    flex-direction: column;
    flex: 1;
    min-width: 0;
    border-top: 5px solid #0078d7;
    border-left: 5px solid #003c68;
    background-color: #fff;
}

.values {
    width: 100%;
    table-layout: fixed;
    border-collapse: separate;
    border-spacing: 0;
    font: 13px/16px "Liberation Mono", monospace;
    color: #222;
}

.values th {
    width: 109px;
    padding: 0 34px 0 0;
    border-right: 3px double #000;
    font-weight: normal;
    text-align: right;
}

.values td {
    width: 72px;
    height: 16px;
    padding: 0 7px 0 0;
    text-align: right;
}

.values td:nth-child(2) {
    width: 10px;
    padding: 0;
}

.values td:last-child {
    width: auto;
    padding: 0;
}

.values tr:first-child td {
    height: 15px;
    line-height: 15px;
}

.a { background-color: #aaaafc; }
.b { background-color: #aaaaf8; }
.c { background-color: #aaaef4; }
.d { background-color: #a9b0f0; }
.e { background-color: #a8b2ec; }
.f { background-color: #a7b4e8; }
.g { background-color: #a5b6e4; }

.tabs {
    display: flex;
    height: 15px;
    margin-top: auto;
}

.tabs > button {
    width: 26px;
    border-top: 1px solid #ccc;
    background: linear-gradient(120deg, transparent 0 3px, #bbb 3px 4px, #f0f0f0 4px);
}

.tabs > .current {
    width: 40px;
    padding-right: 6px;
    border: 0;
    background: none;
}

.tabs > button svg {
    width: 10px;
    height: 7px;
}

.hscroll {
    flex: 1;
    margin-left: 5px;
    background-color: #e5e5e5;
}

.hscroll button {
    width: 17px;
    height: 15px;
    background-color: #f8f8f8;
}

.hscroll svg {
    width: 5px;
    height: 9px;
}

.status {
    display: flex;
    align-items: center;
    flex: none;
    height: 24px;
    padding-top: 2px;
    background-color: #f0f0f0;
    border-bottom: 1px solid #a9b0b8;
    font-family: "Open Sans", sans-serif;
    color: #444;
}

.status span {
    margin-left: -8px;
}

/* Hover details of a map */
.tip {
    position: absolute;
    left: 565px;
    top: 648px;
    width: 323px;
    padding: 3px 5px 5px;
    border: 1px solid #8088a0;
    background-color: #f0f0f0;
    box-shadow: 2px 2px 2px rgba(0, 0, 0, 0.5);
    font: 11px/13px "Open Sans", sans-serif;
}

.tip h2 {
    margin: 0 0 2px;
    padding-bottom: 2px;
    border-bottom: 1px solid #8890a8;
    font: bold 11px/14px Roboto, sans-serif;
    white-space: nowrap;
}

.tip p {
    margin: 0;
}

.tip span {
    display: inline-block;
    width: 53px;
}

.tip .formula {
    margin-top: 13px;
}
```
